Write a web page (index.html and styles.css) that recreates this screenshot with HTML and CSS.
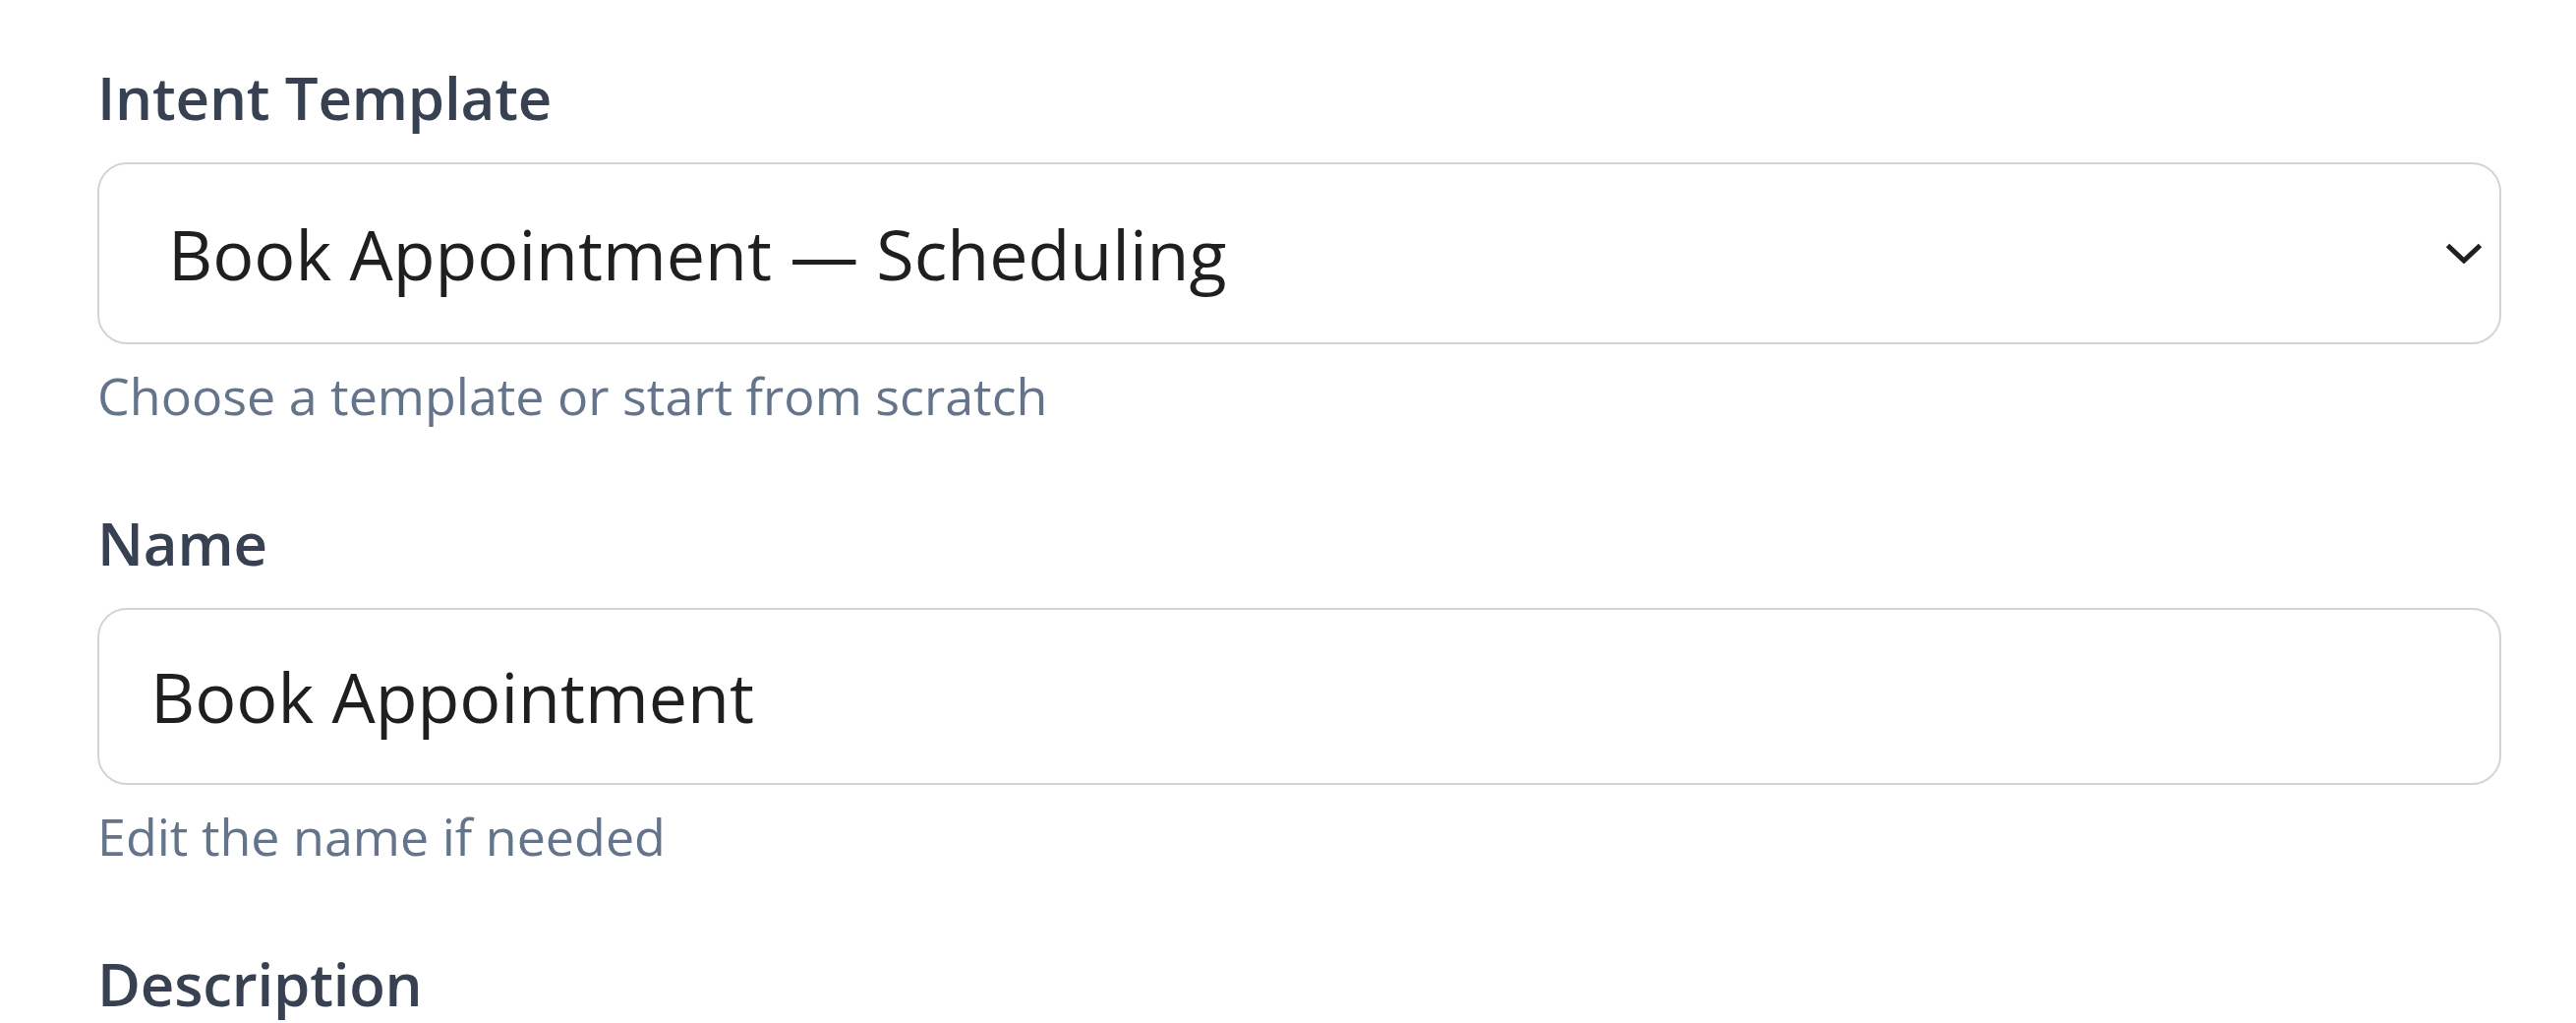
FILE: index.html
```html
<!DOCTYPE html>
<html lang="en">
<head>
<meta charset="utf-8">
<title>Intent form</title>
<link rel="stylesheet" href="styles.css">
</head>
<body>
<form class="form">
  <div class="field">
    <label class="label" for="tpl">Intent Template</label>
    <div class="select-wrap">
      <select id="tpl" class="control select">
        <option>Book Appointment — Scheduling</option>
      </select>
      <svg class="chevron" viewBox="0 0 38 21" width="38" height="21" aria-hidden="true">
        <path d="M2.5 2.5 L19 18 L35.5 2.5" fill="none" stroke="#1f1f1f" stroke-width="5" stroke-linecap="butt" stroke-linejoin="miter"/>
      </svg>
    </div>
    <p class="help">Choose a template or start from scratch</p>
  </div>
  <div class="field">
    <label class="label" for="name">Name</label>
    <input id="name" class="control input" type="text" value="Book Appointment">
    <p class="help">Edit the name if needed</p>
  </div>
  <div class="field">
    <label class="label" for="desc">Description</label>
  </div>
</form>
</body>
</html>
```
FILE: styles.css
```css
* { box-sizing: border-box; }
html, body { margin: 0; padding: 0; background: #ffffff; }
body {
  width: 2620px;
  height: 1040px;
  overflow: hidden;
  font-family: "Open Sans", "Noto Sans", sans-serif;
}
.form {
  padding: 59px 76px 0 99px;
  display: flex;
  flex-direction: column;
}
.field {
  display: flex;
  flex-direction: column;
}
.field + .field { margin-top: 74px; }
.label {
  display: block;
  font-size: 60px;
  line-height: 80px;
  font-weight: 600;
  color: #374151;
  letter-spacing: -0.2px;
  margin-bottom: 26px;
}
.control {
  width: 100%;
  border: 2px solid #d1d5db;
  border-radius: 30px;
  background: #ffffff;
  color: #1f1f1f;
  font-family: inherit;
  font-size: 70px;
  margin: 0;
  outline: none;
}
.select-wrap { position: relative; }
.select {
  appearance: none;
  -webkit-appearance: none;
  height: 185px;
  padding: 0 100px 0 70px;
}
.chevron {
  position: absolute;
  right: 19px;
  top: 82px;
  pointer-events: none;
}
.input {
  height: 180px;
  padding: 0 52px;
}
.help {
  margin: 16px 0 0;
  font-size: 52px;
  line-height: 72px;
  color: #64748b;
}
```
